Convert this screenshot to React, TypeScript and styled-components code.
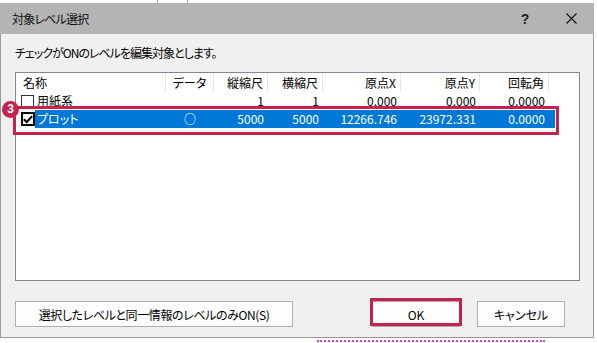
import styled, { createGlobalStyle } from 'styled-components';

const GlobalStyle = createGlobalStyle`
  html, body {
    margin: 0;
    padding: 0;
    background: #ffffff;
  }
  body {
    font-family: 'Noto Sans CJK JP', 'Noto Sans', sans-serif;
    font-feature-settings: 'palt';
    color: #000;
  }
`;

interface Column {
  key: string;
  label: string;
  width: number;
  align: 'left' | 'center' | 'right';
}

const columns: Column[] = [
  { key: 'name', label: '名称', width: 150, align: 'left' },
  { key: 'data', label: 'データ', width: 48, align: 'center' },
  { key: 'sy', label: '縦縮尺', width: 54, align: 'right' },
  { key: 'sx', label: '横縮尺', width: 55, align: 'right' },
  { key: 'x', label: '原点X', width: 78, align: 'right' },
  { key: 'y', label: '原点Y', width: 79, align: 'right' },
  { key: 'rot', label: '回転角', width: 69, align: 'right' },
];

interface Level {
  name: string;
  checked: boolean;
  selected: boolean;
  values: Record<string, string>;
}

const levels: Level[] = [
  {
    name: '用紙系',
    checked: false,
    selected: false,
    values: { data: '', sy: '1', sx: '1', x: '0.000', y: '0.000', rot: '0.0000' },
  },
  {
    name: 'プロット',
    checked: true,
    selected: true,
    values: { data: '○', sy: '5000', sx: '5000', x: '12266.746', y: '23972.331', rot: '0.0000' },
  },
];

const CHECK_W = 19;

function App() {
  return (
    <Page>
      <GlobalStyle />
      <TopStrip />
      <Dialog>
        <TitleBar>
          <TitleText>対象レベル選択</TitleText>
          <TitleButtons>
            <HelpMark>?</HelpMark>
            <CloseMark>
              <svg width='11' height='11' viewBox='0 0 11 11'>
                <path d='M0.5 0.5 L10.5 10.5 M10.5 0.5 L0.5 10.5' stroke='#111' strokeWidth='1.1' fill='none' />
              </svg>
            </CloseMark>
          </TitleButtons>
        </TitleBar>
        <Body>
          <Hint>チェックがONのレベルを編集対象とします。</Hint>
          <ListBox>
            <HeaderRow>
              {columns.map((c) => (
                <HeaderCell key={c.key} $w={c.width} $align={c.align}>
                  {c.label}
                </HeaderCell>
              ))}
            </HeaderRow>
            {levels.map((lv) => (
              <Row key={lv.name}>
                <CheckCell>
                  <CheckBox $checked={lv.checked}>
                    {lv.checked && (
                      <svg width='11' height='11' viewBox='0 0 11 11'>
                        <path d='M1 5.3 L4 8.4 L10 1.8' stroke='#000' strokeWidth='2.4' fill='none' />
                      </svg>
                    )}
                  </CheckBox>
                </CheckCell>
                <RowBody $selected={lv.selected}>
                  <Cell $w={columns[0].width - CHECK_W} $align='left'>
                    {lv.name}
                  </Cell>
                  {columns.slice(1).map((c) => (
                    <Cell key={c.key} $w={c.width} $align={c.align}>
                      {lv.values[c.key]}
                    </Cell>
                  ))}
                  <Cell $w={6} $align='left' />
                </RowBody>
              </Row>
            ))}
            <RowMark />
            <Badge>3</Badge>
          </ListBox>
          <Footer>
            <Button $w={278} $tight>選択したレベルと同一情報のレベルのみON(S)</Button>
            <RightButtons>
              <MarkedWrap>
                <Button $w={88}>OK</Button>
                <ButtonMark />
              </MarkedWrap>
              <Button $w={88}>キャンセル</Button>
            </RightButtons>
          </Footer>
        </Body>
      </Dialog>
      <BottomStrip>
        <DottedLine />
      </BottomStrip>
    </Page>
  );
}

const Page = styled.div`
  width: 597px;
  height: 343px;
  display: flex;
  flex-direction: column;
  overflow: hidden;
`;

const TopStrip = styled.div`
  height: 3px;
  background: linear-gradient(
    to right,
    #ffffff 157px,
    #a8a8a8 157px,
    #a8a8a8 158px,
    #ffffff 158px,
    #ffffff 187px,
    #9ab3d6 187px,
    #9ab3d6 188px,
    #ffffff 188px
  );
`;

const Dialog = styled.div`
  width: 594px;
  height: 335px;
  box-sizing: border-box;
  border: 1px solid #9a9a9a;
  border-top: none;
  background: #f0f0f0;
  display: flex;
  flex-direction: column;
`;

const TitleBar = styled.div`
  height: 31px;
  margin: 0 -1px;
  background: #b4b4b4;
  display: flex;
  align-items: center;
  justify-content: space-between;
  padding-left: 12px;
  font-size: 12px;
`;

const TitleText = styled.span`
  line-height: 16px;
  color: #111;
  letter-spacing: -0.8px;
`;

const TitleButtons = styled.div`
  display: flex;
  align-items: center;
  height: 100%;
`;

const HelpMark = styled.span`
  width: 46px;
  text-align: center;
  font-family: 'Liberation Sans', sans-serif;
  font-size: 14px;
  font-weight: bold;
  color: #222;
  padding-left: 4px;
`;

const CloseMark = styled.span`
  width: 46px;
  display: flex;
  justify-content: center;
  align-items: center;
  padding-bottom: 1px;
`;

const Body = styled.div`
  flex: 1;
  display: flex;
  flex-direction: column;
  padding: 11px 0 0 14px;
`;

const Hint = styled.div`
  font-size: 12px;
  line-height: 16px;
  height: 16px;
  white-space: nowrap;
  letter-spacing: -1px;
`;

const ListBox = styled.div`
  position: relative;
  margin-top: 11px;
  width: 565px;
  height: 209px;
  box-sizing: border-box;
  border: 1px solid #828790;
  background: #ffffff;
  font-size: 12px;
`;

const HeaderRow = styled.div`
  display: flex;
  height: 19px;
`;

const HeaderCell = styled.div<{ $w: number; $align: string }>`
  width: ${({ $w }) => $w}px;
  box-sizing: border-box;
  border-right: 1px solid #e5e5e5;
  text-align: ${({ $align }) => $align};
  padding: ${({ $align }) => ($align === 'left' ? '0 0 0 7px' : $align === 'right' ? '0 4px 0 0' : '0')};
  line-height: 19px;
  white-space: nowrap;
`;

const Row = styled.div`
  display: flex;
  height: 18px;
`;

const CheckCell = styled.div`
  width: ${CHECK_W}px;
  display: flex;
  align-items: center;
  padding-left: 5px;
  box-sizing: border-box;
`;

const CheckBox = styled.span<{ $checked: boolean }>`
  width: ${({ $checked }) => ($checked ? 14 : 13)}px;
  height: ${({ $checked }) => ($checked ? 14 : 13)}px;
  box-sizing: border-box;
  border: ${({ $checked }) => ($checked ? '2px solid #000' : '1px solid #333')};
  background: #fff;
  display: flex;
  align-items: center;
  justify-content: center;
`;

const RowBody = styled.div<{ $selected: boolean }>`
  display: flex;
  background: ${({ $selected }) => ($selected ? '#0078d7' : 'transparent')};
  color: ${({ $selected }) => ($selected ? '#ffffff' : '#000')};
`;

const Cell = styled.div<{ $w: number; $align: string }>`
  width: ${({ $w }) => $w}px;
  box-sizing: border-box;
  text-align: ${({ $align }) => $align};
  padding: ${({ $align }) => ($align === 'left' ? '0 0 0 2px' : $align === 'right' ? '0 4px 0 0' : '0')};
  line-height: 18px;
  white-space: nowrap;
`;

const RowMark = styled.div`
  position: absolute;
  left: -3px;
  top: 33px;
  width: 546px;
  height: 29px;
  box-sizing: border-box;
  border: 3px solid #c4234f;
`;

const Badge = styled.div`
  position: absolute;
  left: -14px;
  top: 28px;
  width: 17px;
  height: 17px;
  border-radius: 50%;
  background: #c4234f;
  color: #fff;
  font-family: 'Liberation Sans', sans-serif;
  font-weight: bold;
  font-size: 12px;
  line-height: 17px;
  text-align: center;
`;

const Footer = styled.div`
  display: flex;
  align-items: center;
  margin-top: 20px;
  width: 550px;
`;

const RightButtons = styled.div`
  display: flex;
  gap: 17px;
  margin-left: auto;
`;

const MarkedWrap = styled.div`
  position: relative;
  display: flex;
`;

const Button = styled.div<{ $w: number; $tight?: boolean }>`
  width: ${({ $w }) => $w}px;
  height: 26px;
  box-sizing: border-box;
  border: 1px solid #adadad;
  background: #fdfdfd;
  font-size: 12px;
  letter-spacing: ${({ $tight }) => ($tight ? '-0.4px' : '0')};
  display: flex;
  align-items: center;
  justify-content: center;
  white-space: nowrap;
`;

const ButtonMark = styled.div`
  position: absolute;
  left: -2px;
  top: -3px;
  width: 92px;
  height: 28px;
  box-sizing: border-box;
  border: 3px solid #c4234f;
`;

const BottomStrip = styled.div`
  flex: 1;
  background: #ffffff;
  padding-top: 2px;
`;

const DottedLine = styled.div`
  margin-left: 317px;
  width: 228px;
  border-top: 2px dotted #d23fd2;
`;

export default App;
